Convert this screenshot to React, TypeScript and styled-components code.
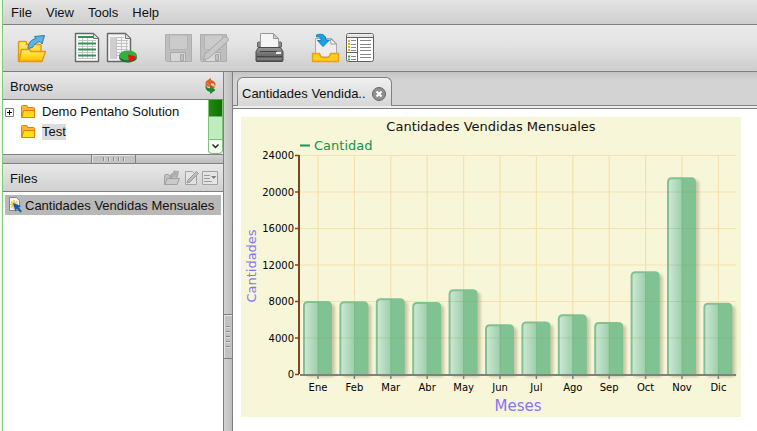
import React from "react";
import styled, { createGlobalStyle } from "styled-components";

const GlobalStyle = createGlobalStyle`
  * { box-sizing: border-box; }
  html, body, #root { height: 100%; }
  body {
    margin: 0;
    overflow: hidden;
    background: #fff;
    color: #111;
    font: 13px/16px "Liberation Sans", Arial, sans-serif;
  }
  button { font: inherit; color: inherit; background: none; border: 0; padding: 0; }
  ul { list-style: none; margin: 0; padding: 0; }
  h2 { margin: 0; font: inherit; }
  svg { display: block; }
`;

const Backdrop = styled.div`
  display: flex;
  height: 100vh;
  background: #eefbe9;
  padding-left: 2px;
`;

const Window = styled.div`
  flex: 1;
  min-width: 0;
  display: flex;
  flex-direction: column;
  border-left: 1px solid #84c87c;
`;

const MenuBar = styled.nav`
  display: flex;
  align-items: center;
  gap: 14px;
  height: 25px;
  padding: 2px 8px 0;
  border-bottom: 1px solid #808080;
  background: linear-gradient(#e4e4e4, #cfcfcf);
`;

const MenuItem = styled.button`
  height: 22px;
`;

const Toolbar = styled.div`
  display: flex;
  align-items: center;
  gap: 24px;
  height: 47px;
  padding: 0 12px;
  border-bottom: 1px solid #808080;
  background: linear-gradient(#eaeaea, #e2e2e2 45%, #cdcdcd);
`;

const ToolGroup = styled.div`
  display: flex;
  gap: 3px;
`;

const IconButton = styled.button<{ $size?: number }>`
  display: flex;
  width: ${(p) => p.$size ?? 32}px;
  height: ${(p) => p.$size ?? 32}px;
  align-items: center;
  justify-content: center;
`;

const Main = styled.div`
  flex: 1;
  min-height: 0;
  display: flex;
`;

const Sidebar = styled.aside`
  width: 220px;
  display: flex;
  flex-direction: column;
  background: #fff;
`;

const PanelHeader = styled.header`
  display: flex;
  align-items: center;
  justify-content: space-between;
  height: 28px;
  padding: 0 5px 0 7px;
  border-bottom: 1px solid #808080;
  background: linear-gradient(#e8e8e8, #d0d0d0);
`;

const PanelTitle = styled.h2`
  padding-top: 2px;
`;

const HeaderTools = styled.div`
  display: flex;
  gap: 3px;
`;

const BrowseBody = styled.div`
  display: flex;
  height: 54px;
`;

const Tree = styled.ul`
  flex: 1;
  padding: 2px 0 0 2px;
`;

const TreeItem = styled.li`
  display: flex;
  align-items: center;
  height: 20px;
`;

const Expander = styled.button`
  display: flex;
  width: 9px;
  height: 9px;
`;

const NodeIcon = styled.span<{ $indent: boolean }>`
  width: 16px;
  height: 16px;
  margin: 0 6px 0 ${(p) => (p.$indent ? 15 : 6)}px;
`;

const NodeLabel = styled.span<{ $selected?: boolean }>`
  background: ${(p) => (p.$selected ? "#dcdcdc" : "transparent")};
`;

const ScrollBar = styled.div`
  display: flex;
  flex-direction: column;
  width: 15px;
  border: solid #7fc07a;
  border-width: 0 1px;
  border-radius: 0 0 4px 4px;
  background: #c0edc0;
`;

const ScrollThumb = styled.div`
  height: 17px;
  border-bottom: 1px solid #74b46e;
  background: linear-gradient(90deg, #1e8a0c, #107000);
`;

const ScrollDown = styled.button`
  display: flex;
  align-items: center;
  justify-content: center;
  height: 15px;
  margin-top: auto;
  border: solid #7fc07a;
  border-width: 1px 0;
  border-radius: 0 0 4px 4px;
  background: #f4fff2;
`;

const Splitter = styled.div<{ $vertical?: boolean }>`
  display: flex;
  flex: none;
  justify-content: center;
  background: linear-gradient(${(p) => (p.$vertical ? "90deg" : "180deg")}, #d2d2d2, #bdbdbd);
  border: solid #808080;
  ${(p) =>
    p.$vertical
      ? "width: 10px; border-width: 0 1px; align-items: flex-start; padding-top: 242px;"
      : "height: 10px; border-width: 1px 0; align-items: center;"}
`;

const Grip = styled.div<{ $vertical?: boolean }>`
  display: flex;
  align-items: center;
  justify-content: center;
  gap: 4px;
  flex-direction: ${(p) => (p.$vertical ? "column" : "row")};
  width: ${(p) => (p.$vertical ? 8 : 45)}px;
  height: ${(p) => (p.$vertical ? 45 : 8)}px;
  border: solid #808080;
  border-width: ${(p) => (p.$vertical ? "1px 0" : "0 1px")};
  background: #c2c2c2;
  box-shadow: inset 1px 1px #e4e4e4;
`;

const GripLine = styled.i<{ $vertical?: boolean }>`
  width: ${(p) => (p.$vertical ? 4 : 1)}px;
  height: ${(p) => (p.$vertical ? 1 : 4)}px;
  background: #8a8a8a;
  box-shadow: ${(p) => (p.$vertical ? "0 1px" : "1px 0")} #dedede;
`;

const FileList = styled.ul`
  padding: 3px 2px;
`;

const FileItem = styled.li`
  display: flex;
  align-items: center;
  gap: 3px;
  height: 20px;
  padding-left: 3px;
  background: #b8b8b8;
  white-space: nowrap;
`;

const FileName = styled.span`
  padding-top: 1px;
`;

const Workspace = styled.main`
  flex: 1;
  min-width: 0;
  display: flex;
  flex-direction: column;
  background: #fff;
`;

const TabStrip = styled.div`
  display: flex;
  align-items: flex-end;
  height: 34px;
  padding-left: 4px;
  border-bottom: 1px solid #808080;
  background: linear-gradient(#c4c4c4, #d3d3d3 8px);
`;

const Tab = styled.div`
  display: flex;
  align-items: center;
  gap: 5px;
  width: 155px;
  height: 29px;
  margin-bottom: -1px;
  padding: 3px 4px 0;
  border: 1px solid #808080;
  border-bottom: 0;
  border-radius: 6px 6px 0 0;
  background: linear-gradient(#f0f0f0, #d6d6d6);
  white-space: nowrap;
`;

const TabBase = styled.div`
  height: 3px;
  border-bottom: 1px solid #808080;
  background: #eee;
`;

const TabLabel = styled.button`
  flex: 1;
  text-align: left;
`;

const Report = styled.div`
  padding: 8px;
`;

const ChartText = styled.text<{ $size: number }>`
  font-family: "DejaVu Sans", sans-serif;
  font-size: ${(p) => p.$size}px;
`;

function OpenIcon() {
  return (
    <svg width="32" height="32" viewBox="0 0 32 32" aria-hidden="true">
      <defs>
        <linearGradient id="gold" x2="0" y2="1">
          <stop stopColor="#ffe98a" /><stop offset=".5" stopColor="#ffdc20" /><stop offset="1" stopColor="#f6b70b" />
        </linearGradient>
      </defs>
      <path d="M3.500 29V10.500q0-1 1-1h6q1 0 1 1v2h13.500q1 0 1 1v6z" fill="url(#gold)" stroke="#e59613" strokeWidth="1.400" />
      <path d="M4 29.500 6.500 17.500h8l1.500 2h14.500l-3.500 10z" fill="url(#gold)" stroke="#e59613" strokeWidth="1.400" strokeLinejoin="round" />
      <path d="M13 16.500c0-5 3-9 8-10L19.500 4.500 29.500 3.500l-2.500 8.500-2-2.500c-4 1-6 3-7.500 6z" fill="#5fb4df" stroke="#2d7ca8" strokeLinejoin="round" />
    </svg>
  );
}

function ReportIcon() {
  return (
    <svg width="32" height="32" viewBox="0 0 32 32" aria-hidden="true">
      <path d="M4.500 1.500h18l5 5v23h-23z" fill="#fdfdfd" stroke="#666" strokeWidth="1.400" strokeLinejoin="round" />
      <path d="M7 8.500h18M7 14.500h18M7 20.500h18M7 26.500h18M11.500 5v22M16.500 5v22M21.500 8v19" stroke="#c4c4c4" />
      <path d="M7 5h15M7 11.500h18M7 17.500h18M7 23.500h18" stroke="#2f9358" strokeWidth="1.800" />
      <path d="M22.500 1.500v5h5z" fill="#ddd" stroke="#777" />
    </svg>
  );
}

function AnalysisIcon() {
  return (
    <svg width="32" height="32" viewBox="0 0 32 32" aria-hidden="true">
      <path d="M1.500 1.500h18l5 5v23h-23z" fill="#f4f4f4" stroke="#666" strokeWidth="1.400" strokeLinejoin="round" />
      <path d="M4 5h6v22H4z" fill="#cfcfcf" />
      <path d="M10 5.500h8M10 8.500h12M10 11.500h12M10 14.500h12M10 17.500h12M10 20.500h4M10 23.500h4M10.500 5v22M15.500 5v15M20.500 8v10" stroke="#c2c2c2" />
      <path d="M19.500 1.500v5h5z" fill="#ddd" stroke="#777" />
      <ellipse cx="22" cy="25.500" rx="9" ry="5" fill="#18702c" />
      <ellipse cx="22" cy="23.500" rx="9" ry="5" fill="#35ad45" />
      <path d="m22 22.500 8 2c-1 3-4 4.500-7 5.500z" fill="#f01010" />
    </svg>
  );
}

function SaveIcon({ pencil = false }: { pencil?: boolean }) {
  return (
    <svg width="32" height="32" viewBox="0 0 32 32" aria-hidden="true">
      <path d="M3.500 2.500h26v27h-25l-1-1z" fill="#bebebe" stroke="#aeaeae" strokeLinejoin="round" />
      <path d="M7.500 3v13.500q0 1 1 1h16q1 0 1-1V3z" fill="#cbcbcb" stroke="#b2b2b2" />
      <path d="M8.500 20.500h15v9h-15z" fill="#d6d6d6" stroke="#aaa" />
      <path d="M18.500 22.500h3v6h-3z" fill="#c2c2c2" stroke="#a4a4a4" />
      {pencil && (
        <path d="m6 28 2-6L26.500 5.500q2-2 4 0t0 4L12 26z" fill="#c8c8c8" stroke="#a8a8a8" strokeLinejoin="round" />
      )}
    </svg>
  );
}

function PrintIcon() {
  return (
    <svg width="32" height="32" viewBox="0 0 32 32" aria-hidden="true">
      <defs>
        <linearGradient id="metal" x2="0" y2="1">
          <stop stopColor="#999" /><stop offset=".5" stopColor="#707070" /><stop offset="1" stopColor="#585858" />
        </linearGradient>
      </defs>
      <path d="M4.500 15V11q0-1 1-1h22q1 0 1 1v4z" fill="#888" stroke="#666" />
      <path d="M7.500 16V1.500h13l5 5V16z" fill="#f4f4f4" stroke="#999" />
      <path d="M20.500 1.500v5h5z" fill="#ccc" stroke="#999" />
      <path d="M5.500 15.500h22l2.500 4v9q0 1-1 1H4q-1 0-1-1v-9z" fill="url(#metal)" stroke="#4a4a4a" />
      <path d="M7 19.500h17M4 24.500h25" stroke="#454545" />
      <path d="M23 20h5v2h-5z" fill="#eee" />
      <path d="M4 27h25" stroke="#999" />
    </svg>
  );
}

function InboxIcon() {
  return (
    <svg width="32" height="32" viewBox="0 0 32 32" aria-hidden="true">
      <path d="M6.500 25V6.500h16l5 5V25z" fill="#eee" stroke="#aaa" />
      <path d="M21.500 6.500 22 12h5.500z" fill="#fff" stroke="#999" />
      <path d="M3.500 21.500h7q1 4 3.500 4h4q2.500 0 3.500-4h8v8h-26z" fill="#fdcc1c" stroke="#e3a018" strokeWidth="1.400" strokeLinejoin="round" />
      <path d="M7.500 3c5-2 9.500 0 9.500 5h3.500L14 14.500 8.500 8.500H12c0-3-1-4-4.500-3.500z" fill="#17a4e6" stroke="#0b83bd" strokeLinejoin="round" />
    </svg>
  );
}

function BrowserIcon() {
  return (
    <svg width="32" height="32" viewBox="0 0 32 32" aria-hidden="true">
      <rect x="2.500" y="1.500" width="27" height="28" rx="2" fill="#fff" stroke="#606060" />
      <path d="M3 2.500h26v3H3z" fill="#e2e2e2" />
      <path d="M3 5.500h26M13.500 6v23M3 20.500h10" stroke="#666" />
      <path d="M7 8.500h5M7 12.500h5M7 15.500h5M7 18.500h5M7 24.500h5M7 27.500h5M16 8.500h11M16 12.500h11M16 15.500h11M16 18.500h11M16 22.500h11M16 25.500h11" stroke="#888" />
      <path d="M4 9h2M4 12h2M4 15h2M4 18h2" stroke="#f2aa14" strokeWidth="2" />
      <path d="M4 24.500h2M4 27.500h2" stroke="#43a058" strokeWidth="2" />
    </svg>
  );
}

function RefreshIcon() {
  return (
    <svg width="16" height="16" viewBox="0 0 16 16" aria-hidden="true">
      <path d="M13 7.500C12.500 5 10.500 5 8.500 5v2L4 3.800 8.500.5v2c3.500.2 5 2 4.500 5z" fill="#e8601f" stroke="#c44a17" strokeWidth=".6" />
      <path d="M4 4.500q.5 3 4.500 3.500l4 1.500" stroke="#e8601f" strokeWidth="2" fill="none" />
      <path d="M4 7.500C4.500 10.500 6.500 10.500 8.500 10.500v-2L13 12l-4.500 3.500v-2C5 13.300 3.500 11 4 7.500z" fill="#1a8b30" stroke="#126a22" strokeWidth=".6" />
    </svg>
  );
}

function FolderIcon() {
  return (
    <svg width="16" height="16" viewBox="0 0 16 16" aria-hidden="true">
      <path d="M1.500 13.500v-11q0-1 1-1h4q1 0 1 1v1h6q1 0 1 1v9z" fill="#ffb432" stroke="#e57d16" strokeLinejoin="round" />
      <path d="M2 13.500 3.500 6.500h11v7z" fill="#ffdf18" stroke="#e57d16" strokeLinejoin="round" />
    </svg>
  );
}

function ExpandIcon() {
  return (
    <svg width="9" height="9" viewBox="0 0 9 9" aria-hidden="true">
      <path d="M.5.5h8v8h-8z" fill="#fff" stroke="#808080" />
      <path d="M2 4.500h5M4.500 2v5" stroke="#000" />
    </svg>
  );
}

function RunIcon() {
  return (
    <svg width="16" height="16" viewBox="0 0 16 16" aria-hidden="true">
      <path d="M.5 14.500V5.500q0-1 1-1h3l1 1.500h7.500v8.500z" fill="#c2c2c2" stroke="#a2a2a2" />
      <path d="M1 14.500 3 8.500h12.500l-2.500 6z" fill="#cacaca" stroke="#a0a0a0" strokeLinejoin="round" />
      <path d="M6 7.500c0-3 2-4.500 4.500-5l-1-1.500 5 .5-1 4.500-1.500-1.500C9.500 5 8.500 6 8 7.500z" fill="#b3b3b3" stroke="#999" strokeWidth=".7" />
    </svg>
  );
}

function EditIcon() {
  return (
    <svg width="16" height="16" viewBox="0 0 16 16" aria-hidden="true">
      <path d="M2.500 1.500h7l4 4v9h-11z" fill="#e2e2e2" stroke="#a2a2a2" />
      <path d="m4 13 1-3 8.500-8.500 2 2L7 12z" fill="#bbb" stroke="#989898" />
    </svg>
  );
}

function OptionsIcon() {
  return (
    <svg width="16" height="16" viewBox="0 0 16 16" aria-hidden="true">
      <path d="M.5 1.500h15v13H.5z" fill="#e4e4e4" stroke="#a2a2a2" />
      <path d="M2 5.500h6M2 8.500h6M2 11.500h8" stroke="#999" />
      <path d="M9 6h5.500l-2.750 3z" fill="#808080" />
    </svg>
  );
}

function ActionIcon() {
  return (
    <svg width="14" height="16" viewBox="0 0 14 16" aria-hidden="true">
      <path d="M1.500.5h7l3 3v10h-10z" fill="#f6f6f6" stroke="#888" />
      <path d="M6 3v9M2 7.500h8M3 4.500l6 6M9 4.500l-6 6" stroke="#f4c54a" strokeWidth="1.500" />
      <path d="m5 6 8 3-2.500 1.500L14 14l-1.500 1.500L9 12l-1.500 2.500z" fill="#0f5ca8" />
    </svg>
  );
}

function CloseIcon() {
  return (
    <svg width="16" height="16" viewBox="0 0 16 16" aria-hidden="true">
      <circle cx="8" cy="8" r="6.500" fill="#909090" stroke="#666" />
      <path d="m5.500 5.500 5 5M10.500 5.500l-5 5" stroke="#fff" strokeWidth="2" />
    </svg>
  );
}

const months = [
  { name: "Ene", value: 8000 },
  { name: "Feb", value: 7970 },
  { name: "Mar", value: 8300 },
  { name: "Abr", value: 7900 },
  { name: "May", value: 9300 },
  { name: "Jun", value: 5450 },
  { name: "Jul", value: 5750 },
  { name: "Ago", value: 6550 },
  { name: "Sep", value: 5700 },
  { name: "Oct", value: 11250 },
  { name: "Nov", value: 21550 },
  { name: "Dic", value: 7800 },
];
const ticks = [0, 4000, 8000, 12000, 16000, 20000, 24000];
const baseline = 257;
const step = 36.4;
const yOf = (v: number) => baseline - (v * 219) / 24000;
const xOf = (i: number) => 77 + i * step;

function SalesChart() {
  return (
    <svg width="500" height="300" viewBox="0 0 500 300" role="img" aria-label="Cantidades Vendidas Mensuales">
      <defs>
        <linearGradient id="shine" x2="1">
          <stop stopColor="#fff" stopOpacity=".6" /><stop offset="1" stopColor="#fff" stopOpacity=".22" />
        </linearGradient>
        <filter id="shadow" x="-30%" y="-10%" width="160%" height="120%">
          <feGaussianBlur stdDeviation="1.500" />
        </filter>
      </defs>
      <rect width="500" height="300" fill="#f8f6d8" />
      {ticks.slice(1).map((t) => (
        <path key={t} d={`M59 ${yOf(t) + 0.5}H495`} stroke="#f5e2ac" />
      ))}
      {months.map((m, i) => (
        <path key={m.name} d={`M${xOf(i)} 38V257`} stroke="#f5e2ac" strokeWidth="1.200" />
      ))}
      {months.map((m, i) => {
        const x = xOf(i) - 15;
        const y = yOf(m.value);
        const h = baseline - y;
        return (
          <g key={m.name}>
            <rect x={x + 3} y={y + 3} width="29" height={h} rx="4" fill="#6b6040" opacity=".32" filter="url(#shadow)" />
            <path d={`M${x} ${baseline}V${y + 5}q0-5 5-5h19q5 0 5 5V${baseline}z`} fill="#80c292" />
            <path d={`M${x + 2} ${baseline}V${y + 5}q0-3 3-3H${x + 15}V${baseline}z`} fill="url(#shine)" />
            <path d={`M${x + 15} ${y + 1}V${baseline}`} stroke="#6eb47f" opacity=".6" />
            {ticks.slice(1).filter((t) => t < m.value - 400).map((t) => (
              <path key={t} d={`M${x} ${yOf(t) + 0.5}h29`} stroke="#7fae6c" opacity=".3" />
            ))}
          </g>
        );
      })}
      <path d="M59 258H495" stroke="#808080" strokeWidth="2" />
      {months.map((m, i) => (
        <path key={m.name} d={`M${xOf(i)} 258v4`} stroke="#808080" strokeWidth="1.500" />
      ))}
      <path d="M58 38V257" stroke="#7d4720" strokeWidth="2" />
      {ticks.map((t) => (
        <path key={t} d={`M54 ${yOf(t) + 0.5}h4`} stroke="#7d4720" strokeWidth="1.500" />
      ))}
      <ChartText $size={13} x="250" y="14" textAnchor="middle" fill="#111">Cantidades Vendidas Mensuales</ChartText>
      <path d="M59 28.500h10" stroke="#1d9350" strokeWidth="2" />
      <ChartText $size={13} x="73" y="33" fill="#14914a">Cantidad</ChartText>
      {ticks.map((t) => (
        <ChartText key={t} $size={10} x="53" y={Math.round(yOf(t)) + 4} textAnchor="end" fill="#000">{t}</ChartText>
      ))}
      {months.map((m, i) => (
        <ChartText key={m.name} $size={10} x={xOf(i)} y="274" textAnchor="middle" fill="#000">{m.name}</ChartText>
      ))}
      <ChartText $size={15} x="277" y="294" textAnchor="middle" fill="#8474f4">Meses</ChartText>
      <ChartText $size={13} transform="translate(15 149) rotate(-90)" textAnchor="middle" fill="#8474f4">Cantidades</ChartText>
    </svg>
  );
}

function GripHandle({ vertical }: { vertical?: boolean }) {
  return (
    <Splitter $vertical={vertical} role="separator">
      <Grip $vertical={vertical}>
        {[0, 1, 2, 3, 4].map((n) => <GripLine key={n} $vertical={vertical} />)}
      </Grip>
    </Splitter>
  );
}

export default function App() {
  return (
    <Backdrop>
      <GlobalStyle />
      <Window>
        <MenuBar>
          {["File", "View", "Tools", "Help"].map((m) => <MenuItem key={m}>{m}</MenuItem>)}
        </MenuBar>
        <Toolbar role="toolbar">
          <ToolGroup><IconButton aria-label="Open"><OpenIcon /></IconButton></ToolGroup>
          <ToolGroup>
            <IconButton aria-label="New report"><ReportIcon /></IconButton>
            <IconButton aria-label="New analysis"><AnalysisIcon /></IconButton>
          </ToolGroup>
          <ToolGroup>
            <IconButton aria-label="Save" disabled><SaveIcon /></IconButton>
            <IconButton aria-label="Save as" disabled><SaveIcon pencil /></IconButton>
          </ToolGroup>
          <ToolGroup><IconButton aria-label="Print"><PrintIcon /></IconButton></ToolGroup>
          <ToolGroup>
            <IconButton aria-label="Workspace"><InboxIcon /></IconButton>
            <IconButton aria-label="Toggle browser"><BrowserIcon /></IconButton>
          </ToolGroup>
        </Toolbar>
        <Main>
          <Sidebar>
            <PanelHeader>
              <PanelTitle>Browse</PanelTitle>
              <IconButton $size={16} aria-label="Refresh"><RefreshIcon /></IconButton>
            </PanelHeader>
            <BrowseBody>
              <Tree>
                <TreeItem>
                  <Expander aria-label="Expand"><ExpandIcon /></Expander>
                  <NodeIcon $indent={false}><FolderIcon /></NodeIcon>
                  <NodeLabel>Demo Pentaho Solution</NodeLabel>
                </TreeItem>
                <TreeItem>
                  <NodeIcon $indent><FolderIcon /></NodeIcon>
                  <NodeLabel $selected>Test</NodeLabel>
                </TreeItem>
              </Tree>
              <ScrollBar>
                <ScrollThumb />
                <ScrollDown aria-label="Scroll down">
                  <svg width="7" height="5" viewBox="0 0 7 5"><path d="m.5.500 3 3 3-3" fill="none" stroke="#222" strokeWidth="1.500" /></svg>
                </ScrollDown>
              </ScrollBar>
            </BrowseBody>
            <GripHandle />
            <PanelHeader>
              <PanelTitle>Files</PanelTitle>
              <HeaderTools>
                <IconButton $size={16} aria-label="Run" disabled><RunIcon /></IconButton>
                <IconButton $size={16} aria-label="Edit" disabled><EditIcon /></IconButton>
                <IconButton $size={16} aria-label="Options" disabled><OptionsIcon /></IconButton>
              </HeaderTools>
            </PanelHeader>
            <FileList>
              <FileItem><ActionIcon /><FileName>Cantidades Vendidas Mensuales</FileName></FileItem>
            </FileList>
          </Sidebar>
          <GripHandle vertical />
          <Workspace>
            <TabStrip>
              <Tab>
                <TabLabel>Cantidades Vendida..</TabLabel>
                <IconButton $size={16} aria-label="Close tab"><CloseIcon /></IconButton>
              </Tab>
            </TabStrip>
            <TabBase />
            <Report><SalesChart /></Report>
          </Workspace>
        </Main>
      </Window>
    </Backdrop>
  );
}
